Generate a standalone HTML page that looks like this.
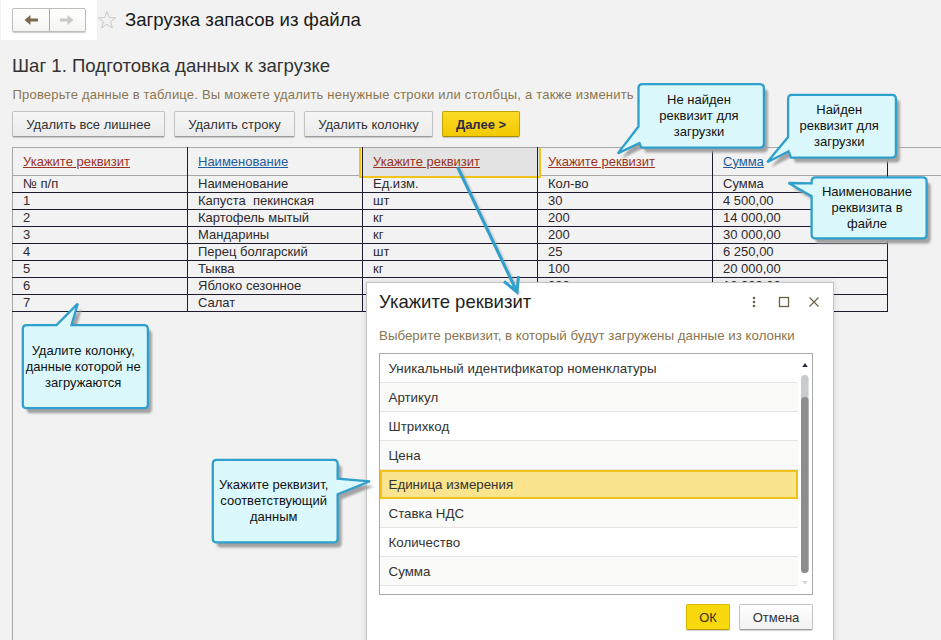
<!DOCTYPE html>
<html><head><meta charset="utf-8">
<style>
*{margin:0;padding:0;box-sizing:border-box}
html,body{width:941px;height:640px;overflow:hidden;background:#f2f2f2;font-family:"Liberation Sans",sans-serif;color:#333}
.a{position:absolute;white-space:nowrap}
.btn{position:absolute;height:26px;padding-top:1px;border:1px solid #c2c2c2;border-bottom-color:#9d9d9d;border-radius:2px;background:linear-gradient(#f6f6f6,#ebebeb);box-shadow:0 1px 1px rgba(0,0,0,.18);font-size:13px;color:#333;text-align:center;line-height:24px}
.hl{position:absolute;height:1px;background:#1f1a2e}
.vl{position:absolute;width:1px;background:#1f1a2e}
.t{position:absolute;font-size:13px;color:#2e2a2e;white-space:nowrap;line-height:16px}
.lnkr{color:#9a3324;text-decoration:underline}
.lnkb{color:#1f5a9e;text-decoration:underline}
</style></head><body>
<!-- top white nav block -->
<div class="a" style="left:1px;top:0;width:96px;height:40px;background:#fff"></div>
<div class="a" style="left:12px;top:8px;width:74px;height:24px;border:1px solid #bdbdbd;border-radius:2px;background:linear-gradient(#fff,#f4f4f0);box-shadow:0 1px 1px rgba(0,0,0,.2)"></div>
<div class="a" style="left:49px;top:9px;width:1px;height:22px;background:#a9a9a9"></div>
<svg class="a" style="left:0;top:0" width="130" height="40">
  <path d="M24.5 20 L30.5 15 L30.5 18.5 L38 18.5 L38 21.5 L30.5 21.5 L30.5 25 Z" fill="#7a6a4f"/>
  <path d="M73.5 20 L67.5 15 L67.5 18.5 L60 18.5 L60 21.5 L67.5 21.5 L67.5 25 Z" fill="#c8c8c8"/>
  <path d="M107 11.5 L109.3 17.6 L115.6 17.8 L110.6 21.7 L112.3 28 L107 24.3 L101.7 28 L103.4 21.7 L98.4 17.8 L104.7 17.6 Z" fill="none" stroke="#c9c9c9" stroke-width="1"/>
</svg>
<div class="a" style="left:125px;top:8px;font-size:18.6px;color:#1a1a1a;line-height:24px">Загрузка запасов из файла</div>

<div class="a" style="left:12px;top:54px;font-size:18.6px;color:#333;line-height:24px">Шаг 1. Подготовка данных к загрузке</div>
<div class="a" style="left:12.5px;top:86.5px;font-size:13px;letter-spacing:0.2px;color:#8a7650;line-height:16px">Проверьте данные в таблице. Вы можете удалить ненужные строки или столбцы, а также изменить наименования</div>

<div class="btn" style="left:12px;top:111px;width:153px">Удалить все лишнее</div>
<div class="btn" style="left:174px;top:111px;width:121px">Удалить строку</div>
<div class="btn" style="left:304px;top:111px;width:129px">Удалить колонку</div>
<div class="btn" style="left:442px;top:111px;width:78px;background:linear-gradient(#fadb26,#f2c800);border-color:#c4a400;border-bottom-color:#a88c00;font-weight:bold;color:#2f2b45">Далее &gt;</div>

<!-- table -->
<div class="a" style="left:12px;top:147px;width:929px;height:1px;background:#a8a8a8"></div>
<div class="a" style="left:12px;top:175px;width:929px;height:1px;background:#a8a8a8"></div>
<div class="a" style="left:12px;top:147px;width:1px;height:493px;background:#a8a8a8"></div>
<!-- selected header cell -->
<div class="a" style="left:359px;top:148px;width:182px;height:30px;border:2px solid #f0c419;border-top:none;background:#e3e3e3"></div>
<div class="hl" style="left:12px;top:192px;width:876px"></div>
<div class="hl" style="left:12px;top:209px;width:876px"></div>
<div class="hl" style="left:12px;top:226px;width:876px"></div>
<div class="hl" style="left:12px;top:243px;width:876px"></div>
<div class="hl" style="left:12px;top:260px;width:876px"></div>
<div class="hl" style="left:12px;top:277px;width:876px"></div>
<div class="hl" style="left:12px;top:294px;width:876px"></div>
<div class="hl" style="left:12px;top:311px;width:876px"></div>
<div class="vl" style="left:187px;top:147px;height:165px"></div>
<div class="vl" style="left:362px;top:147px;height:165px"></div>
<div class="vl" style="left:537px;top:147px;height:165px"></div>
<div class="vl" style="left:712px;top:147px;height:165px"></div>
<div class="vl" style="left:887px;top:147px;height:165px"></div>

<div class="t lnkr" style="left:23px;top:153.5px">Укажите реквизит</div>
<div class="t lnkb" style="left:198px;top:153.5px">Наименование</div>
<div class="t lnkr" style="left:373px;top:153.5px">Укажите реквизит</div>
<div class="t lnkr" style="left:548px;top:153.5px">Укажите реквизит</div>
<div class="t lnkb" style="left:723px;top:153.5px">Сумма</div>

<div class="t" style="left:23px;top:176px">№ п/п</div>
<div class="t" style="left:198px;top:176px">Наименование</div>
<div class="t" style="left:373px;top:176px">Ед.изм.</div>
<div class="t" style="left:548px;top:176px">Кол-во</div>
<div class="t" style="left:723px;top:176px">Сумма</div>

<div class="t" style="left:23px;top:193px">1</div><div class="t" style="left:198px;top:193px">Капуста&nbsp; пекинская</div><div class="t" style="left:373px;top:193px">шт</div><div class="t" style="left:548px;top:193px">30</div><div class="t" style="left:723px;top:193px">4 500,00</div>
<div class="t" style="left:23px;top:210px">2</div><div class="t" style="left:198px;top:210px">Картофель мытый</div><div class="t" style="left:373px;top:210px">кг</div><div class="t" style="left:548px;top:210px">200</div><div class="t" style="left:723px;top:210px">14 000,00</div>
<div class="t" style="left:23px;top:227px">3</div><div class="t" style="left:198px;top:227px">Мандарины</div><div class="t" style="left:373px;top:227px">кг</div><div class="t" style="left:548px;top:227px">200</div><div class="t" style="left:723px;top:227px">30 000,00</div>
<div class="t" style="left:23px;top:244px">4</div><div class="t" style="left:198px;top:244px">Перец болгарский</div><div class="t" style="left:373px;top:244px">шт</div><div class="t" style="left:548px;top:244px">25</div><div class="t" style="left:723px;top:244px">6 250,00</div>
<div class="t" style="left:23px;top:261px">5</div><div class="t" style="left:198px;top:261px">Тыква</div><div class="t" style="left:373px;top:261px">кг</div><div class="t" style="left:548px;top:261px">100</div><div class="t" style="left:723px;top:261px">20 000,00</div>
<div class="t" style="left:23px;top:278px">6</div><div class="t" style="left:198px;top:278px">Яблоко сезонное</div><div class="t" style="left:373px;top:278px">кг</div><div class="t" style="left:548px;top:278px">300</div><div class="t" style="left:723px;top:278px">18 000,00</div>
<div class="t" style="left:23px;top:295px">7</div><div class="t" style="left:198px;top:295px">Салат</div><div class="t" style="left:373px;top:295px">шт</div><div class="t" style="left:548px;top:295px">40</div><div class="t" style="left:723px;top:295px">8 000,00</div>

<!-- DIALOG -->
<div class="a" style="left:366px;top:282px;width:468px;height:370px;background:#fff;border:1px solid #c4c4c4;box-shadow:0 0 6px rgba(0,0,0,.12)"></div>
<div class="a" style="left:379px;top:289.6px;font-size:18.5px;line-height:24px;color:#1e1e1e">Укажите реквизит</div>
<svg class="a" style="left:745px;top:290px" width="80" height="24">
  <circle cx="9" cy="8" r="1.3" fill="#6e5f45"/><circle cx="9" cy="12" r="1.3" fill="#6e5f45"/><circle cx="9" cy="16" r="1.3" fill="#6e5f45"/>
  <rect x="34.5" y="7.5" width="9" height="9" fill="none" stroke="#6e5f45" stroke-width="1.3"/>
  <path d="M64.5 7.5 L73.5 16.5 M73.5 7.5 L64.5 16.5" stroke="#6e5f45" stroke-width="1.2"/>
</svg>
<div class="a" style="left:379px;top:328.2px;font-size:13.33px;line-height:16px;color:#8a7650">Выберите реквизит, в который будут загружены данные из колонки</div>
<div class="a" style="left:379px;top:353px;width:434px;height:242px;border:1px solid #a9a9a9;background:#fff"></div>
<div class="a" style="left:380px;top:354px;width:418px;height:29px;background:#fff;border-bottom:1px solid #e4e4e4"></div>
<div class="a" style="left:388.5px;top:361px;font-size:13.33px;line-height:16px;color:#333">Уникальный идентификатор номенклатуры</div>
<div class="a" style="left:380px;top:383px;width:418px;height:29px;background:#fafaf8;border-bottom:1px solid #e4e4e4"></div>
<div class="a" style="left:388.5px;top:390px;font-size:13.33px;line-height:16px;color:#333">Артикул</div>
<div class="a" style="left:380px;top:412px;width:418px;height:29px;background:#fff;border-bottom:1px solid #e4e4e4"></div>
<div class="a" style="left:388.5px;top:419px;font-size:13.33px;line-height:16px;color:#333">Штрихкод</div>
<div class="a" style="left:380px;top:441px;width:418px;height:29px;background:#fafaf8;border-bottom:1px solid #e4e4e4"></div>
<div class="a" style="left:388.5px;top:448px;font-size:13.33px;line-height:16px;color:#333">Цена</div>
<div class="a" style="left:380px;top:470px;width:418px;height:29px;background:#fbe48e;border:2px solid #f2c21b"></div>
<div class="a" style="left:388.5px;top:477px;font-size:13.33px;line-height:16px;color:#333">Единица измерения</div>
<div class="a" style="left:380px;top:499px;width:418px;height:29px;background:#fafaf8;border-bottom:1px solid #e4e4e4"></div>
<div class="a" style="left:388.5px;top:506px;font-size:13.33px;line-height:16px;color:#333">Ставка НДС</div>
<div class="a" style="left:380px;top:528px;width:418px;height:29px;background:#fff;border-bottom:1px solid #e4e4e4"></div>
<div class="a" style="left:388.5px;top:535px;font-size:13.33px;line-height:16px;color:#333">Количество</div>
<div class="a" style="left:380px;top:557px;width:418px;height:29px;background:#fafaf8;border-bottom:1px solid #e4e4e4"></div>
<div class="a" style="left:388.5px;top:564px;font-size:13.33px;line-height:16px;color:#333">Сумма</div>
<svg class="a" style="left:798px;top:354px" width="14" height="240">
  <path d="M4.2 13 L7 9 L9.8 13 Z" fill="#2a2540"/>
  <rect x="3" y="21" width="7.6" height="198" rx="3.8" fill="#c9ccce"/>
  <rect x="3" y="43" width="7.6" height="176" rx="3.8" fill="#8d8d8d"/>
  <path d="M4.5 227 L7 230.5 L9.5 227 Z" fill="#cfcfcf"/>
</svg>
<div class="btn" style="left:686px;top:604px;width:44px;height:26px;background:#f7d80c;border-color:#d9b800;border-bottom-color:#b59a00;color:#3a3020;line-height:24px">ОК</div>
<div class="btn" style="left:739px;top:604px;width:74px;height:26px;background:linear-gradient(#fff,#f2f2f2);line-height:24px">Отмена</div>
<svg class="a" style="left:0;top:0" width="941" height="640">
<defs><filter id="sh" x="-20%" y="-20%" width="140%" height="140%"><feGaussianBlur stdDeviation="1.25"/></filter></defs>
<path d="M642.5,84.1 L759.9,84.1 Q763.9,84.1 763.9,88.1 L763.9,143.6 Q763.9,147.6 759.9,147.6 L641.50,147.60 L639.50,143.00 L617.80,153.40 L638.50,126.50 L638.5,88.1 Q638.5,84.1 642.5,84.1 Z" fill="#a2a2a2" transform="translate(4,5)" filter="url(#sh)"/>
<path d="M642.5,84.1 L759.9,84.1 Q763.9,84.1 763.9,88.1 L763.9,143.6 Q763.9,147.6 759.9,147.6 L641.50,147.60 L639.50,143.00 L617.80,153.40 L638.50,126.50 L638.5,88.1 Q638.5,84.1 642.5,84.1 Z" fill="#dbf9fd" stroke="#2f9fcb" stroke-width="2.3" stroke-linejoin="miter"/>
<path d="M792.1,94.8 L891.9,94.8 Q895.9,94.8 895.9,98.8 L895.9,153.6 Q895.9,157.6 891.9,157.6 L791.00,157.60 L788.60,151.30 L767.20,162.20 L788.10,137.00 L788.1,98.8 Q788.1,94.8 792.1,94.8 Z" fill="#a2a2a2" transform="translate(4,5)" filter="url(#sh)"/>
<path d="M792.1,94.8 L891.9,94.8 Q895.9,94.8 895.9,98.8 L895.9,153.6 Q895.9,157.6 891.9,157.6 L791.00,157.60 L788.60,151.30 L767.20,162.20 L788.10,137.00 L788.1,98.8 Q788.1,94.8 792.1,94.8 Z" fill="#dbf9fd" stroke="#2f9fcb" stroke-width="2.3" stroke-linejoin="miter"/>
<path d="M815.6,177.4 L922.6,177.4 Q926.6,177.4 926.6,181.4 L926.6,234.4 Q926.6,238.4 922.6,238.4 L815.6,238.4 Q811.6,238.4 811.6,234.4 L811.60,196.20 L788.50,183.00 L811.60,183.40 L811.6,181.4 Q811.6,177.4 815.6,177.4 Z" fill="#a2a2a2" transform="translate(4,5)" filter="url(#sh)"/>
<path d="M815.6,177.4 L922.6,177.4 Q926.6,177.4 926.6,181.4 L926.6,234.4 Q926.6,238.4 922.6,238.4 L815.6,238.4 Q811.6,238.4 811.6,234.4 L811.60,196.20 L788.50,183.00 L811.60,183.40 L811.6,181.4 Q811.6,177.4 815.6,177.4 Z" fill="#dbf9fd" stroke="#2f9fcb" stroke-width="2.3" stroke-linejoin="miter"/>
<path d="M26.8,325.1 L56.50,325.10 L77.80,303.60 L71.50,325.10 L143.9,325.1 Q147.9,325.1 147.9,329.1 L147.9,404.2 Q147.9,408.2 143.9,408.2 L26.8,408.2 Q22.8,408.2 22.8,404.2 L22.8,329.1 Q22.8,325.1 26.8,325.1 Z" fill="#a2a2a2" transform="translate(4,5)" filter="url(#sh)"/>
<path d="M26.8,325.1 L56.50,325.10 L77.80,303.60 L71.50,325.10 L143.9,325.1 Q147.9,325.1 147.9,329.1 L147.9,404.2 Q147.9,408.2 143.9,408.2 L26.8,408.2 Q22.8,408.2 22.8,404.2 L22.8,329.1 Q22.8,325.1 26.8,325.1 Z" fill="#dbf9fd" stroke="#2f9fcb" stroke-width="2.3" stroke-linejoin="miter"/>
<path d="M216.79999999999998,459.8 L333.65,459.8 Q337.65,459.8 337.65,463.8 L337.60,478.60 L370.00,481.30 L337.60,494.20 L337.65,538.4 Q337.65,542.4 333.65,542.4 L216.79999999999998,542.4 Q212.79999999999998,542.4 212.79999999999998,538.4 L212.79999999999998,463.8 Q212.79999999999998,459.8 216.79999999999998,459.8 Z" fill="#a2a2a2" transform="translate(4,5)" filter="url(#sh)"/>
<path d="M216.79999999999998,459.8 L333.65,459.8 Q337.65,459.8 337.65,463.8 L337.60,478.60 L370.00,481.30 L337.60,494.20 L337.65,538.4 Q337.65,542.4 333.65,542.4 L216.79999999999998,542.4 Q212.79999999999998,542.4 212.79999999999998,538.4 L212.79999999999998,463.8 Q212.79999999999998,459.8 216.79999999999998,459.8 Z" fill="#dbf9fd" stroke="#2f9fcb" stroke-width="2.3" stroke-linejoin="miter"/>
<path d="M457.6,167 L517,292" stroke="#8a8a8a" stroke-width="3" transform="translate(2,2)" filter="url(#sh)" opacity="0.5"/>
<path d="M457.6,167 L517,292 M504,281.5 L517,292 L518.5,276" fill="none" stroke="#2f9fcb" stroke-width="3" stroke-linecap="butt" stroke-linejoin="miter"/>
</svg>
<div class="a" style="left:619px;top:92px;width:160px;text-align:center;font-size:13px;line-height:16px;color:#111">Не найден<br>реквизит для<br>загрузки</div>
<div class="a" style="left:759.2px;top:102px;width:160px;text-align:center;font-size:13px;line-height:16px;color:#111">Найден<br>реквизит для<br>загрузки</div>
<div class="a" style="left:787px;top:184px;width:160px;text-align:center;font-size:13px;line-height:16px;color:#111">Наименование<br>реквизита в<br>файле</div>
<div class="a" style="left:3.200000000000003px;top:343px;width:160px;text-align:center;font-size:13px;line-height:16px;color:#111">Удалите колонку,<br>данные которой не<br>загружаются</div>
<div class="a" style="left:193.7px;top:476.5px;width:160px;text-align:center;font-size:13px;line-height:16px;color:#111">Укажите реквизит,<br>соответствующий<br>данным</div>
</body></html>
